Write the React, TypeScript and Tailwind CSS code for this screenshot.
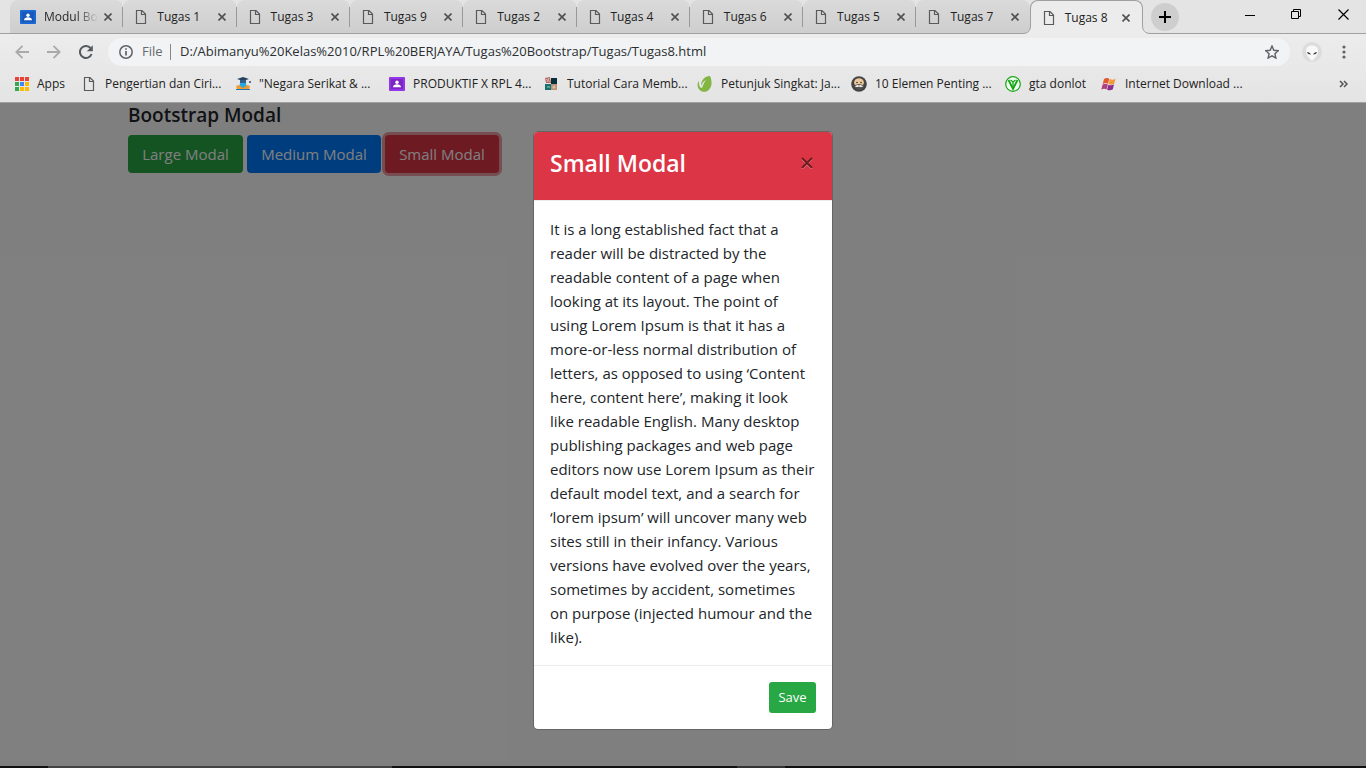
import React from "react";

const tabs = ["Modul Bo", "Tugas 1", "Tugas 3", "Tugas 9", "Tugas 2", "Tugas 4", "Tugas 6", "Tugas 5", "Tugas 7", "Tugas 8"];

const paragraph = [
  "It is a long established fact that a",
  "reader will be distracted by the",
  "readable content of a page when",
  "looking at its layout. The point of",
  "using Lorem Ipsum is that it has a",
  "more-or-less normal distribution of",
  "letters, as opposed to using ‘Content",
  "here, content here’, making it look",
  "like readable English. Many desktop",
  "publishing packages and web page",
  "editors now use Lorem Ipsum as their",
  "default model text, and a search for",
  "‘lorem ipsum’ will uncover many web",
  "sites still in their infancy. Various",
  "versions have evolved over the years,",
  "sometimes by accident, sometimes",
  "on purpose (injected humour and the",
  "like).",
];

function FileIcon() {
  return (
    <svg width="16" height="16" viewBox="0 0 16 16" fill="none" stroke="#5a5a5a" strokeWidth="1.2" className="shrink-0">
      <path d="M3.5 1.5h5.5l3.500 3.500v9.500h-9z M8.500 1.500v4h4" />
    </svg>
  );
}

function ClassroomIcon({ purple = false }: { purple?: boolean }) {
  return (
    <svg width="16" height="16" viewBox="0 0 16 16" className="shrink-0">
      <rect y="1" width="16" height="14" rx="1" fill={purple ? "#9334e6" : "#1967d2"} />
      <rect x="2" y="3" width="12" height="10" fill={purple ? "#681da8" : "#174ea6"} opacity=".55" />
      <circle cx="8" cy="6.2" r="1.7" fill="#fff" />
      <path d="M4 11.2c0-2 2-2.9 4-2.9s4 .9 4 2.9z" fill="#fff" />
    </svg>
  );
}

function CloseGlyph() {
  return (
    <svg width="8" height="8" viewBox="0 0 8 8" stroke="#505050" strokeWidth="1.6">
      <path d="M.5.5l7 7M7.5.5l-7 7" />
    </svg>
  );
}

function AppsIcon() {
  const colors = ["#ea4335", "#ea4335", "#ea4335", "#34a853", "#4285f4", "#fbbc05", "#34a853", "#fbbc05", "#fbbc05"];
  return (
    <svg width="14" height="14" viewBox="0 0 14 14" className="shrink-0">
      {colors.map((c, i) => (
        <rect key={i} x={(i % 3) * 5} y={Math.floor(i / 3) * 5} width="4" height="4" fill={c} />
      ))}
    </svg>
  );
}

function ReaderIcon() {
  return (
    <svg width="16" height="16" viewBox="0 0 16 16" className="shrink-0">
      <path d="M2 3L8 1l6 2-6 2z" fill="#26415f" />
      <path d="M5 4h6v3q-3 1.5-6 0z" fill="#345e8c" />
      <path d="M5 7h6l1 5H4z" fill="#27a9e1" />
      <path d="M1 10l3-1 4 3 4-3 3 1-1 3H2z" fill="#f29a2e" />
      <path d="M1 13h14v1H1z" fill="#2675b0" />
      <path d="M14 5h2v2h-2z" fill="#5a7490" />
    </svg>
  );
}

function MosaicIcon() {
  return (
    <svg width="16" height="16" viewBox="0 0 16 16" className="shrink-0">
      <path d="M2 2l5-1 1 6H3z" fill="#b26b66" />
      <path d="M3 3l4 3M6 2L4 6" stroke="#e0b5ad" />
      <path d="M8 2h6v6H8z" fill="#06303a" />
      <path d="M2 8h6v6H2z" fill="#17716d" />
      <path d="M4 10h3v2H4z" fill="#55a19b" />
      <path d="M8 8h6v6H8z" fill="#b89378" />
      <circle cx="11" cy="11" r="1.6" fill="#d9bda6" />
    </svg>
  );
}

function LeafIcon() {
  return (
    <svg width="16" height="16" viewBox="0 0 16 16" className="shrink-0">
      <path d="M13 0C8 0 4 4 4 10C5 7 7 5 9 4C7 7 6 9 5 12C2 12 2 8 2 5C-1 9 1 14 5 15.500C10 17 14 13 14.500 8C14.700 5 14 2 13 0z" fill="#82b541" />
    </svg>
  );
}

function FaceIcon() {
  return (
    <svg width="16" height="16" viewBox="0 0 16 16" className="shrink-0">
      <circle cx="8" cy="8" r="7.8" fill="#444" />
      <ellipse cx="8" cy="7" rx="5" ry="4.800" fill="#ecc79c" />
      <path d="M3 7l1 2 4-1 4 1 1-2v4l-5 3-5-3z" fill="#57534f" />
      <path d="M4 10.500Q6 8 8 9.500Q10 8 12 10.500Q10 11.500 8 10.500Q6 11.500 4 10.500z" fill="#eee" />
      <circle cx="6" cy="6.500" r=".8" fill="#333" />
      <circle cx="10" cy="6.500" r=".8" fill="#333" />
    </svg>
  );
}

function VIcon() {
  return (
    <svg width="16" height="16" viewBox="0 0 16 16" fill="none" stroke="#14a514" className="shrink-0">
      <circle cx="8" cy="8" r="7.300" strokeWidth="1.200" fill="#f4fff4" />
      <path d="M3.500 4l4.500 9 4.500-9" strokeWidth="1.800" />
      <path d="M5.500 4l2.500 2 2.500-2M8 6v6" strokeWidth="1.300" />
    </svg>
  );
}

function WindowsIcon() {
  return (
    <svg width="16" height="16" viewBox="0 0 16 16" className="shrink-0">
      <path d="M3 3Q5.500 1 8.300 2.700L7 7.700Q4.500 6.300 1.700 8z" fill="#e0592f" />
      <path d="M8.800 3Q11.500 4.500 14.500 2.800L13.200 7.800Q10.500 9.500 7.500 8z" fill="#f29a35" />
      <path d="M1.600 8.600Q4.300 7 6.900 8.400L5.600 13.200Q3 12 .300 13.500z" fill="#b0407f" />
      <path d="M7.400 8.700Q10 10 13 8.500L11.700 13.500Q9 15 6.100 13.700z" fill="#8b2c8e" />
    </svg>
  );
}

const bookmarks = [
  { label: "Apps", width: "w-[66px]", icon: <AppsIcon /> },
  { label: "Pengertian dan Ciri...", width: "w-[154px]", icon: <FileIcon /> },
  { label: "\"Negara Serikat & ...", width: "w-[154px]", icon: <ReaderIcon /> },
  { label: "PRODUKTIF X RPL 4...", width: "w-[154px]", icon: <ClassroomIcon purple /> },
  { label: "Tutorial Cara Memb...", width: "w-[154px]", icon: <MosaicIcon /> },
  { label: "Petunjuk Singkat: Ja...", width: "w-[154px]", icon: <LeafIcon /> },
  { label: "10 Elemen Penting ...", width: "w-[154px]", icon: <FaceIcon /> },
  { label: "gta donlot", width: "w-[96px]", icon: <VIcon /> },
  { label: "Internet Download ...", width: "w-[154px]", icon: <WindowsIcon /> },
];

function TabFlare({ side }: { side: "left" | "right" }) {
  return (
    <svg
      width="9"
      height="9"
      viewBox="0 0 9 9"
      className={side === "left" ? "absolute bottom-0 -left-[9px]" : "absolute -right-[9px] bottom-0 -scale-x-100"}
    >
      <path d="M8.500 0C8.500 6 6 8.500 0 8.500V9H9V0z" fill="#ececec" />
      <path d="M8.500 0C8.500 6 6 8.500 0 8.500" fill="none" stroke="#a0a0a0" />
    </svg>
  );
}

function TabStrip() {
  return (
    <header className="flex h-[34px] bg-[#e4e4e4]">
      <div className="w-[10px] border-b border-[#a0a0a0]" />
      <nav aria-label="Tabs" className="grid w-[1133px] grid-cols-10">
        {tabs.map((name, i) => {
          const active = i === tabs.length - 1;
          return (
            <div
              key={name}
              className={
                active
                  ? "relative flex min-w-0 items-center rounded-t-lg border border-b-0 border-[#a0a0a0] bg-[#ececec] pr-3 pl-[10px]"
                  : "flex min-w-0 items-center rounded-t-lg border-b border-[#a0a0a0] bg-linear-to-b from-[#dadada] to-[#cecece] pl-[10px]"
              }
            >
              {active && <TabFlare side="left" />}
              {active && <TabFlare side="right" />}
              {i === 0 ? <ClassroomIcon /> : <FileIcon />}
              <a
                href="#"
                className={
                  i === 0
                    ? "ml-2 bg-linear-to-r from-[#222] from-60% to-transparent bg-clip-text text-xs whitespace-nowrap text-transparent"
                    : "ml-2 text-xs whitespace-nowrap text-[#222]"
                }
              >
                {name}
              </a>
              <button aria-label={"Close " + name} className="ml-auto">
                <CloseGlyph />
              </button>
              {!active && <span className={i === 8 ? "w-[11px]" : "ml-[10px] h-5 w-px bg-[#999]"} />}
            </div>
          );
        })}
      </nav>
      <div className="flex flex-1 items-start justify-between border-b border-[#a0a0a0]">
        <button aria-label="New tab" className="mt-[3px] ml-2 grid size-7 place-items-center rounded-full bg-[#cecece]">
          <svg width="12" height="12" viewBox="0 0 12 12" stroke="#000" strokeWidth="2">
            <path d="M6 0v12M0 6h12" />
          </svg>
        </button>
        <div className="flex h-7 items-center gap-9 pr-[17px]">
          <button aria-label="Minimize">
            <svg width="10" height="11" viewBox="0 0 10 11" stroke="#000">
              <path d="M0 6.500h10" />
            </svg>
          </button>
          <button aria-label="Restore">
            <svg width="11" height="11" viewBox="0 0 11 11" fill="none" stroke="#000">
              <path d="M.5 2.500h7v7h-7zM2.500 2.500v-2h7v7h-2" />
            </svg>
          </button>
          <button aria-label="Close window">
            <svg width="11" height="11" viewBox="0 0 11 11" stroke="#000" strokeWidth="1.200">
              <path d="M.5.5l10 10M10.500.5l-10 10" />
            </svg>
          </button>
        </div>
      </div>
    </header>
  );
}

function Toolbar() {
  return (
    <div className="flex h-9 items-center bg-linear-to-b from-[#ececec] to-[#e8e8e8] pr-4 pl-[15px]">
      <button aria-label="Back">
        <svg width="14" height="14" viewBox="0 0 14 14" fill="none" stroke="#aaa" strokeWidth="1.800">
          <path d="M14 7H1.500M7.500.8L1.300 7l6.200 6.200" />
        </svg>
      </button>
      <button aria-label="Forward" className="ml-[18px]">
        <svg width="14" height="14" viewBox="0 0 14 14" fill="none" stroke="#aaa" strokeWidth="1.800">
          <path d="M0 7h12.500M6.500.8L12.700 7l-6.200 6.200" />
        </svg>
      </button>
      <button aria-label="Reload" className="ml-[18px]">
        <svg width="14" height="14" viewBox="0 0 14 14" fill="none" stroke="#555a5f" strokeWidth="2">
          <path d="M12.600 9A6 6 0 1 1 11.600 3.200" />
          <path d="M13.800.2v6H7.800z" fill="#555a5f" stroke="none" />
        </svg>
      </button>
      <div className="ml-[15px] flex h-7 flex-1 items-center rounded-full bg-[#f1f3f4] pr-[11px] pl-[11px]">
        <svg width="14" height="14" viewBox="0 0 14 14" fill="none" stroke="#5f6368" strokeWidth="1.500" className="shrink-0">
          <circle cx="7" cy="7" r="6.200" />
          <path d="M7 6v4.500M7 3.300v1.500" strokeWidth="1.700" />
        </svg>
        <span className="ml-[9px] w-5 text-[13px] text-[#666a6e]">File</span>
        <span className="ml-2 h-4 w-px bg-[#888]" />
        <input
          aria-label="Address"
          defaultValue="D:/Abimanyu%20Kelas%2010/RPL%20BERJAYA/Tugas%20Bootstrap/Tugas/Tugas8.html"
          className="ml-[9px] min-w-0 flex-1 bg-transparent text-[13px] text-[#2c2e31] outline-none"
        />
        <button aria-label="Bookmark this page">
          <svg width="14" height="14" viewBox="0 0 14 14" fill="none" stroke="#5f6368" strokeWidth="1.400">
            <path d="M7 1l1.800 4.300 4.500.4-3.400 3 1 4.400L7 10.800l-3.900 2.300 1-4.400-3.400-3 4.500-.4z" />
          </svg>
        </button>
      </div>
      <button aria-label="Profile" className="ml-3">
        <svg width="20" height="20" viewBox="0 0 20 20">
          <circle cx="10" cy="10" r="10" fill="#dcdcdc" />
          <path d="M4 9q0-5.500 6-5.500T16 9q0 5-6 10Q4 14 4 9z" fill="#f8f8f8" />
          <path d="M5 10q3 0 4 2.500-3.500 0-4-2.500zM15 10q-3 0-4 2.500 3.500 0 4-2.500z" fill="#333" />
        </svg>
      </button>
      <button aria-label="Menu" className="ml-4">
        <svg width="12" height="14" viewBox="0 0 12 14" fill="#5f6368">
          <circle cx="6" cy="2" r="1.600" />
          <circle cx="6" cy="7" r="1.600" />
          <circle cx="6" cy="12" r="1.600" />
        </svg>
      </button>
    </div>
  );
}

function BookmarksBar() {
  return (
    <nav aria-label="Bookmarks" className="flex h-[33px] items-center border-b border-[#a0a0a0] bg-linear-to-b from-[#e8e8e8] to-[#e4e4e4] pr-[18px] pb-1 pl-[15px]">
      {bookmarks.map((b) => (
        <a key={b.label} href="#" className={"flex items-center gap-2 text-xs whitespace-nowrap text-[#222] " + b.width}>
          {b.icon}
          {b.label}
        </a>
      ))}
      <button aria-label="More bookmarks" className="ml-auto">
        <svg width="9" height="8" viewBox="0 0 9 8" fill="none" stroke="#505357" strokeWidth="1.500">
          <path d="M1 1l3 3-3 3M5 1l3 3-3 3" />
        </svg>
      </button>
    </nav>
  );
}

function SmallModal() {
  return (
    <div className="absolute inset-0 bg-black/50">
      <section
        role="dialog"
        aria-labelledby="modal-title"
        className="mx-auto mt-7 w-[300px] overflow-hidden rounded-[5px] border border-black/20 bg-white bg-clip-padding"
      >
        <div className="flex items-start justify-between border-b border-[#e9ecef] bg-[#dc3545] px-4 pt-[15px] pb-[21px]">
          <h2 id="modal-title" className="text-[23px] leading-8 font-semibold text-white">
            Small Modal
          </h2>
          <button aria-label="Close" className="mt-[10px] mr-[3px]">
            <svg width="12" height="12" viewBox="0 0 12 12" fill="none">
              <path d="M1 2l10 10M11 2L1 12" stroke="#fff" strokeWidth="1.500" opacity=".5" />
              <path d="M1 1l10 10M11 1L1 11" stroke="#6e1b22" strokeWidth="2" />
            </svg>
          </button>
        </div>
        <p className="p-4 text-[15px] leading-6 whitespace-nowrap text-[#212529]">
          {paragraph.map((line) => (
            <React.Fragment key={line}>
              {line}
              <br />
            </React.Fragment>
          ))}
        </p>
        <div className="flex justify-end border-t border-[#e9ecef] p-4">
          <button className="h-[31px] w-[47px] rounded-[3px] bg-[#28a745] text-[13px] text-white">Save</button>
        </div>
      </section>
    </div>
  );
}

export default function App() {
  return (
    <div className="flex min-h-screen flex-col font-['Open_Sans','Noto_Sans',sans-serif]">
      <TabStrip />
      <Toolbar />
      <BookmarksBar />
      <main className="relative flex-1 bg-white">
        <div className="mx-auto max-w-[1140px] px-[15px]">
          <h1 className="mb-2 text-[19px] leading-6 font-semibold text-[#212529]">Bootstrap Modal</h1>
          <div className="flex gap-1 text-[15px] text-white">
            <button className="h-[38px] w-[115px] rounded bg-[#28a745]">Large Modal</button>
            <button className="h-[38px] w-[134px] rounded bg-[#007bff]">Medium Modal</button>
            <button className="h-[38px] w-[114px] rounded bg-[#dc3545] ring-3 ring-[#dc3545]/50">Small Modal</button>
          </div>
        </div>
        <SmallModal />
      </main>
      <footer className="flex h-[2px] bg-[#111]">
        <div className="ml-12 w-[344px] bg-[#444]" />
        <div className="ml-[345px] w-12 bg-[#333]" />
      </footer>
    </div>
  );
}
